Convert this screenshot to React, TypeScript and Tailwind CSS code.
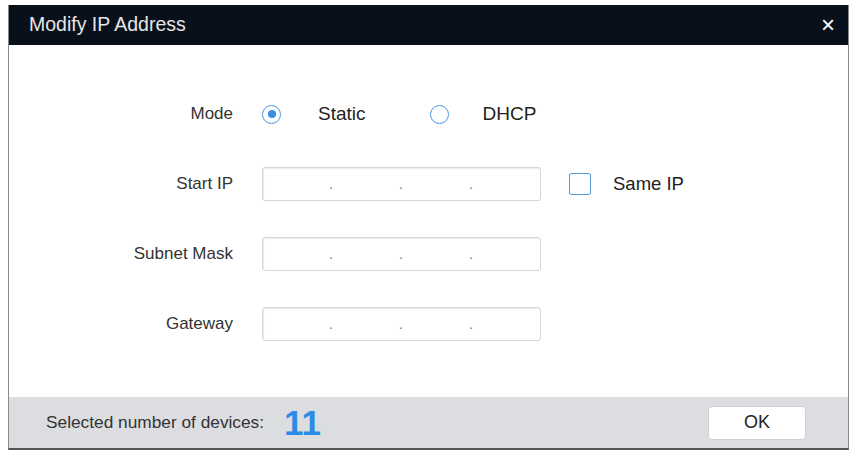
import React, { useState } from 'react';

const font = { fontFamily: '"Liberation Sans", Arial, sans-serif' };

const IpField = () => (
  <div className="flex h-[34px] w-[279px] items-center rounded-[3px] border border-[#d6d6d6] bg-white shadow-[inset_1px_1px_1px_rgba(0,0,0,0.08)]">
    <span className="w-[66px]" />
    <span className="w-[70px] text-[14px] text-[#777]">.</span>
    <span className="w-[70px] text-[14px] text-[#777]">.</span>
    <span className="text-[14px] text-[#777]">.</span>
  </div>
);

const Radio = ({ checked }: { checked: boolean }) => (
  <span className="flex h-[19px] w-[19px] items-center justify-center rounded-full border-[1.5px] border-[#4a98e6] bg-white">
    {checked && <span className="h-[8px] w-[8px] rounded-full bg-[#3b8ee4]" />}
  </span>
);

const App = () => {
  const [mode] = useState('static');

  return (
    <div className="h-[458px] w-[856px] bg-white pl-[8px] pt-[5px]" style={font}>
      <div className="flex h-[445px] w-[841px] flex-col border-l border-r border-[#8a8a8a] border-b-2 border-b-[#555]">
        {/* Title bar */}
        <div className="flex h-[40px] items-center justify-between bg-[#08101c] pl-[20px] pr-[13px]">
          <span className="text-[19.5px] text-[#e6e6e6]">Modify IP Address</span>
          <span className="text-[24px] leading-none text-white">×</span>
        </div>

        {/* Body */}
        <div className="flex flex-1 flex-col bg-white pt-[55px]">
          <div className="flex h-[28px] items-center">
            <span className="w-[224px] text-right text-[17px] text-[#333]">Mode</span>
            <span className="ml-[29px]"><Radio checked={mode === 'static'} /></span>
            <span className="ml-[37px] text-[19px] text-[#222]">Static</span>
            <span className="ml-[64px]"><Radio checked={mode === 'dhcp'} /></span>
            <span className="ml-[34px] text-[19px] text-[#222]">DHCP</span>
          </div>

          <div className="mt-[39px] flex items-center">
            <span className="w-[224px] text-right text-[17px] text-[#333]">Start IP</span>
            <span className="ml-[29px]"><IpField /></span>
            <span className="ml-[28px] h-[22px] w-[22px] rounded-[2px] border-[1.5px] border-[#5a9be0] bg-white" />
            <span className="ml-[22px] text-[18.5px] text-[#222]">Same IP</span>
          </div>

          <div className="mt-[36px] flex items-center">
            <span className="w-[224px] text-right text-[17px] text-[#333]">Subnet Mask</span>
            <span className="ml-[29px]"><IpField /></span>
          </div>

          <div className="mt-[36px] flex items-center">
            <span className="w-[224px] text-right text-[17px] text-[#333]">Gateway</span>
            <span className="ml-[29px]"><IpField /></span>
          </div>
        </div>

        {/* Footer */}
        <div className="flex h-[51px] items-center justify-between bg-[#dcdde1] pl-[37px] pr-[42px]">
          <div className="flex items-center">
            <span className="text-[17.3px] text-[#333]">Selected number of devices:</span>
            <span className="ml-[20px] text-[35px] font-bold leading-none text-[#2d8be6]">11</span>
          </div>
          <button className="h-[34px] w-[98px] rounded-[4px] border border-[#d0d0d0] bg-white text-[18px] text-[#222]">
            OK
          </button>
        </div>
      </div>
    </div>
  );
};

export default App;
